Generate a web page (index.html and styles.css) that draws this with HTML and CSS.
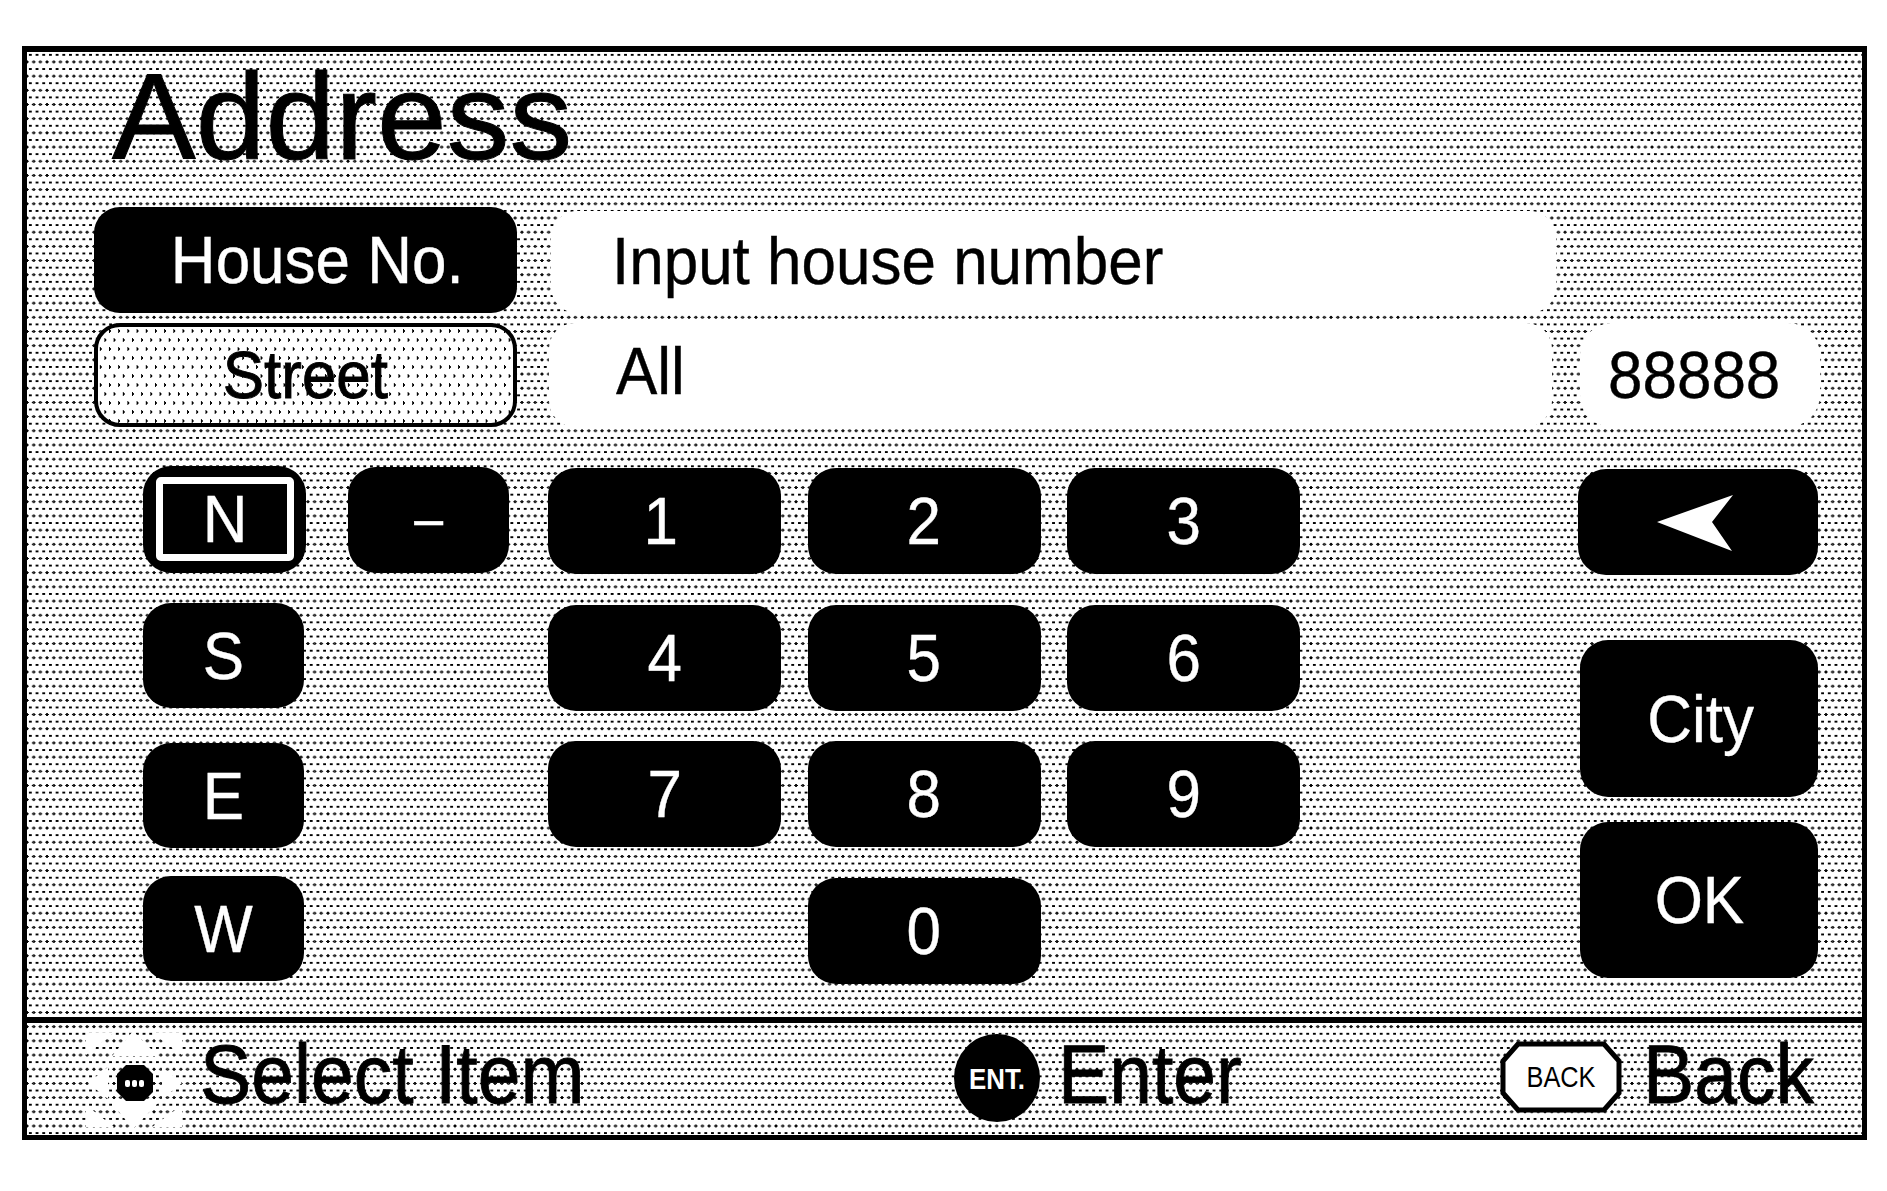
FILE: index.html
```html
<!DOCTYPE html>
<html lang="en">
<head>
    <meta charset="UTF-8">
    <meta name="viewport" content="width=device-width, initial-scale=1.0">
    <title>Address</title>
    <link rel="stylesheet" href="styles.css">
</head>
<body>
    <div class="screen">
        <div class="main">
            <h1 class="title">Address</h1>

            <div class="field-row">
                <div class="tab tab-active"><span class="label label-house">House No.</span></div>
                <div class="field field-prompt"><span class="label label-left">Input house number</span></div>
            </div>
            <div class="field-row field-row-second">
                <div class="tab tab-idle"><span class="label label-dark">Street</span></div>
                <div class="field field-value"><span class="label label-left">All</span></div>
                <div class="field field-count"><span class="label">88888</span></div>
            </div>

            <div class="keypad">
                <div class="compass">
                    <div class="key key-n"><div class="focus-ring"><span class="label">N</span></div></div>
                    <div class="key key-s"><span class="label">S</span></div>
                    <div class="key key-e"><span class="label">E</span></div>
                    <div class="key key-w"><span class="label">W</span></div>
                </div>
                <div class="key key-dash"><span class="label label-dash">–</span></div>
                <div class="digits">
                    <div class="key"><span class="label label-one">1</span></div>
                    <div class="key"><span class="label">2</span></div>
                    <div class="key"><span class="label">3</span></div>
                    <div class="key"><span class="label">4</span></div>
                    <div class="key"><span class="label">5</span></div>
                    <div class="key"><span class="label">6</span></div>
                    <div class="key"><span class="label">7</span></div>
                    <div class="key"><span class="label">8</span></div>
                    <div class="key"><span class="label">9</span></div>
                    <div class="key key-zero"><span class="label">0</span></div>
                </div>
                <div class="actions">
                    <div class="key key-back">
                        <svg width="80" height="58" viewBox="0 0 80 58"><polygon points="1,27 77,0 56,27 76,56" fill="#fff"/></svg>
                    </div>
                    <div class="key key-city"><span class="label">City</span></div>
                    <div class="key key-ok"><span class="label">OK</span></div>
                </div>
            </div>
        </div>

        <div class="footer">
            <div class="hint">
                <svg class="joystick" width="96" height="110" viewBox="-4 0 96 110">
                    <g fill="#fff">
                        <polygon points="43,8 68,33 22,33"/>
                        <polygon points="43,106 68,80 22,80"/>
                        <polygon points="62,10 92,10 92,32"/>
                        <polygon points="24,10 -4,10 -4,32"/>
                        <polygon points="62,104 92,104 92,82"/>
                        <polygon points="24,104 -4,104 -4,82"/>
                        <polygon points="18,44 18,76 -2,60"/>
                        <polygon points="72,44 72,76 92,60"/>
                    </g>
                    <polygon points="36,42 54,42 63,51 63,69 54,78 36,78 27,69 27,51"/>
                    <g fill="#fff">
                        <rect x="35" y="57" width="5" height="7" rx="2"/>
                        <rect x="42" y="57" width="5" height="7" rx="2"/>
                        <rect x="49" y="57" width="5" height="7" rx="2"/>
                    </g>
                </svg>
                <span class="hint-text">Select Item</span>
            </div>
            <div class="hint">
                <svg class="icon-ent" width="86" height="88" viewBox="0 0 86 88">
                    <ellipse cx="43" cy="44" rx="43" ry="44"/>
                    <text class="icon-text icon-text-bold" x="43" y="55" fill="#fff" text-anchor="middle" textLength="56" lengthAdjust="spacingAndGlyphs">ENT.</text>
                </svg>
                <span class="hint-text hint-enter">Enter</span>
            </div>
            <div class="hint">
                <svg class="icon-back" width="122" height="72" viewBox="0 0 122 72">
                    <polygon points="18,3 104,3 119,20 119,52 104,69 18,69 3,52 3,20" fill="#fff" stroke="#000" stroke-width="5"/>
                    <text class="icon-text" x="61" y="46" text-anchor="middle" textLength="69" lengthAdjust="spacingAndGlyphs">BACK</text>
                </svg>
                <span class="hint-text hint-back">Back</span>
            </div>
        </div>
    </div>
</body>
</html>
```

FILE: styles.css
```css
* { box-sizing: border-box; }
html, body { margin: 0; padding: 0; }
body { background: #fff; color: #000; font-family: "Liberation Sans", Arial, sans-serif; height: 1191px; overflow: hidden; }

/* frame with the dotted screen tone */
.screen {
    width: 1845px;
    height: 1094px;
    margin: 46px 0 0 22px;
    border: 5px solid #000;
    border-top-width: 6px;
    background-color: #fff;
    background-image:
        radial-gradient(ellipse 1.7px 1.25px at 3.35px 3px, #000 98%, transparent 100%),
        radial-gradient(ellipse 1.7px 1.25px at 0 10.1px, #000 98%, transparent 100%),
        radial-gradient(ellipse 1.7px 1.25px at 6.7px 10.1px, #000 98%, transparent 100%);
    background-size: 6.7px 14.2px;
}

.main { height: 965px; }
.title {
    margin: 0 0 30px 85px;
    padding-top: 5px;
    font-size: 123px;
    line-height: 120px;
    font-weight: normal;
    -webkit-text-stroke: 1px #000;
    transform: scaleX(1.02);
    transform-origin: left center;
}

/* text in the screenshot is a bit narrower than the font */
.label { display: inline-block; font-size: 67px; line-height: 70px; transform: scaleX(0.925); white-space: nowrap; -webkit-text-stroke: 0.4px currentColor; }
.label-left { transform-origin: left center; }
.label-house { margin-left: 24px; }
.label-dark { -webkit-text-stroke: 0.9px #000; }
.label-dash { font-size: 56px; margin-bottom: 4px; }
.label-one { margin-right: 8px; }

.field-row { display: flex; margin-left: 67px; height: 106px; }
.field-row-second { margin-top: 10px; height: 104px; }

.tab { width: 423px; display: flex; align-items: center; justify-content: center; border-radius: 26px; }
.tab-active { background: #000; color: #fff; }
.tab-idle {
    border: 4px solid #000;
    background-color: #fff;
    background-image:
        radial-gradient(ellipse 1px 2px at 2.5px 4px, #000 98%, transparent 100%),
        radial-gradient(ellipse 1px 2px at 7.1px 13px, #000 98%, transparent 100%);
    background-size: 9.2px 18px;
}

.field { display: flex; align-items: center; background: #fff; border-radius: 26px; }
.field-prompt { width: 1005px; height: 102px; margin: 4px 0 0 34px; padding: 0 0 2px 61px; }
.field-value { width: 1003px; margin-left: 32px; padding: 0 0 8px 67px; }
.field-count { width: 240px; margin-left: 28px; padding-right: 12px; justify-content: center; border-radius: 32px; }

.keypad { display: flex; align-items: flex-start; margin: 39px 0 0 116px; }
.key { display: flex; align-items: center; justify-content: center; height: 106px; background: #000; color: #fff; border-radius: 28px; }

.compass { width: 163px; }
.compass .key { width: 161px; height: 105px; }
.compass .key-n { width: 163px; height: 107px; padding: 11px 12px 12px 13px; }
.focus-ring { flex: 1; align-self: stretch; display: flex; align-items: center; justify-content: center; border: 7px solid #fff; border-radius: 5px; }
.compass .key-s { margin-top: 30px; }
.compass .key-e { margin-top: 35px; }
.compass .key-w { margin-top: 28px; }

.key-dash { width: 161px; margin: 1px 0 0 42px; }

.digits { display: grid; grid-template-columns: repeat(3, 233px); grid-auto-rows: 106px; column-gap: 26.5px; row-gap: 30.5px; margin: 2px 0 0 39px; }
.key-zero { grid-column: 2; }

.actions { width: 240px; margin: 3px 0 0 278px; }
.key-back { width: 240px; padding: 4px 4px 0 0; }
.key-city { width: 238px; height: 157px; margin: 65px 0 0 2px; padding-left: 4px; }
.key-ok { width: 238px; height: 156px; margin: 25px 0 0 2px; }

.footer { display: grid; grid-template-columns: 927px 548px 1fr; height: 117px; border-top: 6px solid #000; padding-bottom: 5px; }
.footer .hint { display: flex; align-items: center; }
.footer .hint:first-child { padding-left: 59px; }
.joystick { margin-right: 18px; flex: none; }
.icon-ent, .icon-back { flex: none; }
.icon-back { margin: 0 0 2px -2px; }
.hint-text {
    display: inline-block;
    margin-bottom: 9px;
    font-size: 84px;
    line-height: 90px;
    white-space: nowrap;
    -webkit-text-stroke: 0.9px #000;
    transform-origin: left center;
    transform: scaleX(0.915);
}
.hint-enter { margin-left: 18px; }
.hint-back { margin-left: 21px; }
.icon-text { font-family: "Liberation Sans", Arial, sans-serif; font-size: 30px; }
.icon-text-bold { font-weight: bold; }
```
